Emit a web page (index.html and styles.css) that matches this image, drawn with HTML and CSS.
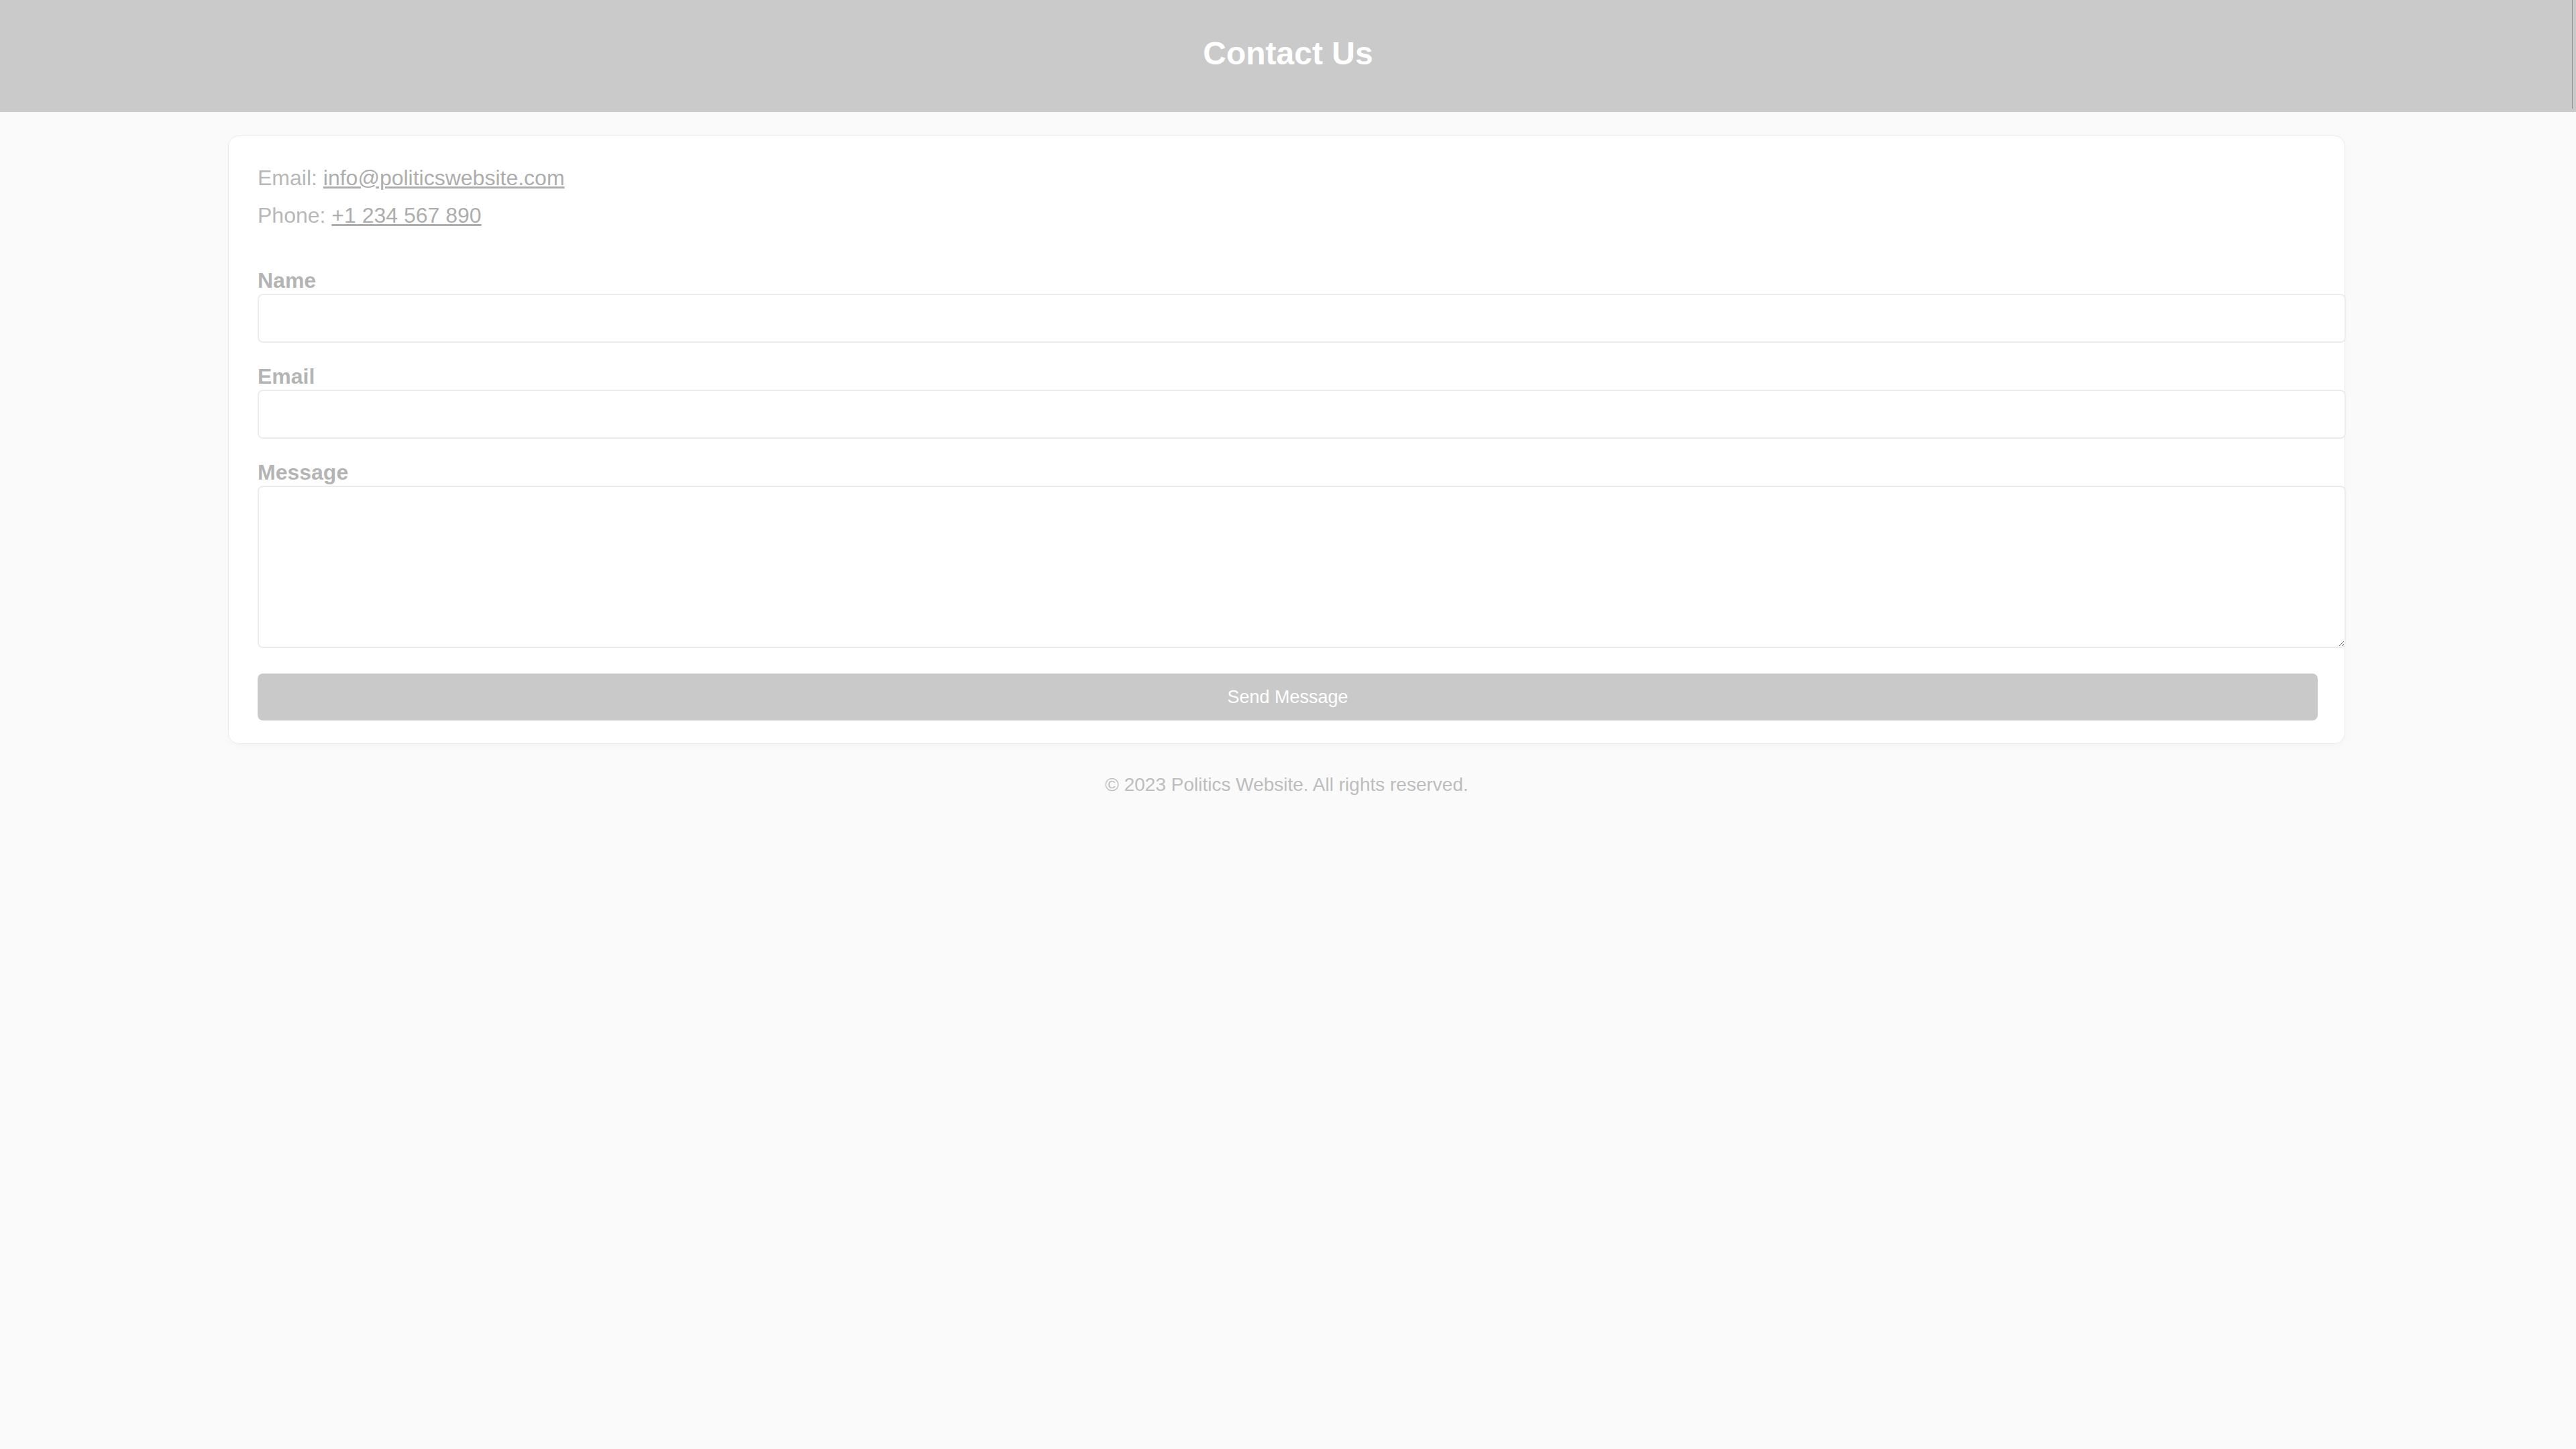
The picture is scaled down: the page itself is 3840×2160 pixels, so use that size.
FILE: index.html
```html
<!DOCTYPE html>
<html lang="en">
<head>
<meta charset="utf-8">
<title>Contact Us</title>
<link rel="stylesheet" href="styles.css">
</head>
<body>
<header class="site-header">
  <h1 class="site-title">Contact Us</h1>
</header>
<main class="page">
  <section class="card">
    <div class="info">
      <p class="info-line">Email: <a class="info-link" href="#">info@politicswebsite.com</a></p>
      <p class="info-line">Phone: <a class="info-link" href="#">+1 234 567 890</a></p>
    </div>
    <form class="form">
      <div class="field">
        <label class="label" for="name">Name</label>
        <input class="input" id="name" type="text">
      </div>
      <div class="field">
        <label class="label" for="email">Email</label>
        <input class="input" id="email" type="email">
      </div>
      <div class="field">
        <label class="label" for="message">Message</label>
        <textarea class="input textarea" id="message"></textarea>
      </div>
      <button class="submit" type="button">Send Message</button>
    </form>
  </section>
  <footer class="footer">© 2023 Politics Website. All rights reserved.</footer>
</main>
</body>
</html>
```
FILE: styles.css
```css
html, body {
  margin: 0;
  padding: 0;
}
body {
  background: #fafafa;
  font-family: "Liberation Sans", Arial, sans-serif;
  color: #b4b4b4;
  min-height: 2160px;
}
.site-header {
  position: relative;
  background: #cacaca;
  height: 167px;
  box-sizing: border-box;
  padding-top: 52px;
  text-align: center;
}
.site-header::after {
  content: "";
  position: absolute;
  top: 0;
  right: 5px;
  width: 1px;
  height: 162px;
  background: #8f8f8f;
}
.site-title {
  margin: 0;
  font-size: 48px;
  line-height: 56px;
  font-weight: 700;
  color: #ffffff;
}
.page {
  display: flex;
  flex-direction: column;
  padding-top: 35px;
  padding-left: 340px;
}
.card {
  width: 3156px;
  box-sizing: border-box;
  background: #ffffff;
  border: 1px solid #ebebeb;
  border-radius: 16px;
  box-shadow: 0 3px 10px rgba(0, 0, 0, 0.025);
  padding: 34px 40px 34px 43px;
}
.info {
  margin-bottom: 51px;
}
.info-line {
  margin: 0;
  font-size: 32px;
  line-height: 56px;
  color: #b8b8b8;
}
.info-link {
  color: #adadad;
  text-decoration: underline;
}
.form {
  display: flex;
  flex-direction: column;
  gap: 32px;
}
.field {
  display: flex;
  flex-direction: column;
  gap: 2px;
}
.label {
  font-size: 32px;
  line-height: 36px;
  font-weight: 700;
  color: #b4b4b4;
}
.input {
  display: block;
  box-sizing: content-box;
  width: 100%;
  height: 33px;
  padding: 18px 19px;
  margin: 0;
  border: 2px solid #ececec;
  border-radius: 8px;
  background: #ffffff;
  font-family: "Liberation Sans", Arial, sans-serif;
  font-size: 28px;
  color: #777777;
  outline: none;
}
.textarea {
  height: 202px;
  resize: vertical;
}
.submit {
  display: block;
  width: 100%;
  height: 70px;
  margin-top: 6px;
  border: none;
  border-radius: 8px;
  background: #c9c9c9;
  color: #ffffff;
  font-family: "Liberation Sans", Arial, sans-serif;
  font-size: 27px;
  cursor: pointer;
}
.footer {
  width: 3156px;
  margin-top: 41px;
  text-align: center;
  font-size: 28px;
  line-height: 40px;
  color: #bdbdbd;
}
```
